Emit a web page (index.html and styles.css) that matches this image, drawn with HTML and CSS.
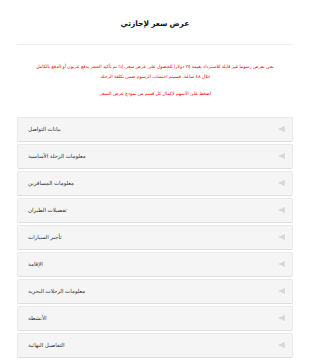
FILE: index.html
```html
<!DOCTYPE html>
<html lang="ar">
<head>
  <meta charset="UTF-8" />
  <meta name="viewport" content="width=device-width, initial-scale=1.0"/>
  <title>عرض سعر لإجازتي</title>
  <link rel="stylesheet" href="styles.css">
</head>
<body>
  <div class="page">
    <header class="quote-header">
      <h1>عرض سعر لإجازتي</h1>
    </header>

    <div class="notice">
      <p dir="rtl">نحن نفرض رسوما غير قابلة للاسترداد بقيمة ٢٥ دولارا للحصول على عرض سعر. إذا تم تأكيد الحجز بدفع عربون أو الدفع بالكامل<br>خلال ٤٨ ساعة، فسيتم احتساب الرسوم ضمن تكلفة الرحلة.</p>
      <p dir="rtl">اضغط على الأسهم لإكمال كل قسم من نموذج عرض السعر.</p>
    </div>

    <!-- quote form sections -->
    <div class="sections">
      <div class="section-row"><span class="section-title">بيانات التواصل</span><span class="arrow"></span></div>
      <div class="section-row"><span class="section-title">معلومات الرحلة الأساسية</span><span class="arrow"></span></div>
      <div class="section-row"><span class="section-title">معلومات المسافرين</span><span class="arrow"></span></div>
      <div class="section-row"><span class="section-title">تفضيلات الطيران</span><span class="arrow"></span></div>
      <div class="section-row"><span class="section-title">تأجير السيارات</span><span class="arrow"></span></div>
      <div class="section-row"><span class="section-title">الإقامة</span><span class="arrow"></span></div>
      <div class="section-row"><span class="section-title">معلومات الرحلات البحرية</span><span class="arrow"></span></div>
      <div class="section-row"><span class="section-title">الأنشطة</span><span class="arrow"></span></div>
      <div class="section-row"><span class="section-title">التفاصيل النهائية</span><span class="arrow"></span></div>
    </div>
  </div>
</body>
</html>
```

FILE: styles.css
```css
* { margin: 0; padding: 0; box-sizing: border-box; }
body {
  font-family: "Liberation Sans", "DejaVu Sans", sans-serif;
  background: #fff;
  color: #333;
}
.page {
  padding: 0 17px;
}
.quote-header {
  padding-top: 19px;
  height: 45px;
  border-bottom: 1px solid #f0f0f0;
  text-align: center;
}
.quote-header h1 {
  font-size: 7.5px;
  font-weight: bold;
  color: #111;
}
.notice {
  margin: 17px -8px 0;
  text-align: center;
  color: #f00;
  font-size: 4.6px;
  line-height: 10px;
}
.notice p { margin-bottom: 7px; }
.sections {
  margin-top: 18px;
}
.section-row {
  display: flex;
  align-items: center;
  justify-content: space-between;
  height: 25px;
  margin-bottom: 2px;
  padding: 0 7px 2px 10px;
  background: #f5f5f5;
  border: 1px solid #e9e9e9;
  border-bottom-color: #dedede;
  border-radius: 2px;
}
.section-title {
  font-size: 5.5px;
  color: #333;
}
.arrow {
  width: 0;
  height: 0;
  border-top: 3px solid transparent;
  border-bottom: 3px solid transparent;
  border-right: 7px solid #d8d8d8;
}
```
